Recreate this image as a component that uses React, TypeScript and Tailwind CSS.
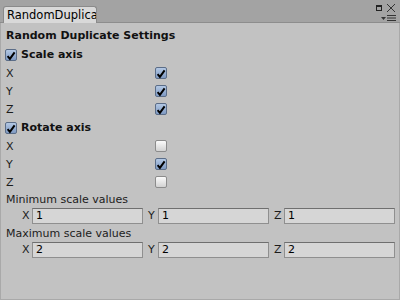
import React from 'react';

const font = { fontFamily: '"DejaVu Sans", Verdana, sans-serif' };

function Check({ on }: { on: boolean }) {
  return (
    <div
      className={`w-[12px] h-[12px] rounded-[2px] border flex items-center justify-center ${
        on
          ? 'border-[#5b6d88] bg-gradient-to-b from-[#b3c8e4] to-[#7f9ac3]'
          : 'border-[#8c8c8c] bg-gradient-to-b from-[#fbfbfb] to-[#d2d2d2]'
      }`}
    >
      {on && (
        <svg width="10" height="10" viewBox="0 0 10 10" className="mt-px">
          <path d="M1.6 5.2 L3.9 7.8 L8.6 1.4" fill="none" stroke="#000" strokeWidth="2" />
        </svg>
      )}
    </div>
  );
}

function HeaderToggle({ label, extra }: { label: string; extra?: string }) {
  return (
    <div className={`h-[18px] flex items-center pl-[4px] gap-[4px] ${extra ?? ''}`}>
      <Check on={true} />
      <span className="text-[11px] font-bold text-[#111] pt-px">{label}</span>
    </div>
  );
}

function AxisRow({ label, on }: { label: string; on: boolean }) {
  return (
    <div className="h-[18px] flex items-center pl-[5px]">
      <span className="w-[149px] text-[11px] text-[#1c1c1c] pt-[2px]">{label}</span>
      <Check on={on} />
    </div>
  );
}

function Field({ label, value }: { label: string; value: string }) {
  return (
    <div className="flex items-center flex-1">
      <span className="text-[11px] text-[#1c1c1c] w-[11px] pl-px">{label}</span>
      <div className="flex-1 h-[16px] bg-[#d6d6d6] border border-[#8f8f8f] border-t-[#6f6f6f] flex items-center pl-[3px] text-[11px] text-black">
        {value}
      </div>
    </div>
  );
}

function VectorRow({ values }: { values: string[] }) {
  return (
    <div className="h-[16px] flex items-center gap-[4px] pl-[20px] pr-[4px]">
      <Field label="X" value={values[0]} />
      <Field label="Y" value={values[1]} />
      <Field label="Z" value={values[2]} />
    </div>
  );
}

export default function App() {
  return (
    <div className="w-[400px] h-[300px] flex flex-col bg-[#c2c2c2] select-none" style={font}>
      {/* tab strip */}
      <div className="h-[23px] bg-[#a3a3a3] border-b border-[#8d8d8d] flex items-end justify-between pl-[3px] pr-[4px] relative">
        <div className="w-[94px] h-[17px] bg-[#d9d9d9] border border-b-0 border-[#8a8a8a] rounded-t-[3px] pl-[3px] text-[11.5px] text-black leading-[16px] overflow-hidden whitespace-nowrap mb-[-1px]">
          RandomDuplicate
        </div>
        <div className="absolute right-[4px] top-[3px] flex flex-col items-end gap-[2px]">
          <div className="flex items-center gap-[4px]">
            <svg width="6" height="6" viewBox="0 0 6 6">
              <rect x="0.5" y="0.5" width="5" height="5" fill="none" stroke="#222" />
              <rect x="0" y="0" width="6" height="2" fill="#222" />
            </svg>
            <svg width="10" height="10" viewBox="0 0 10 10">
              <path d="M1 1 L9 9 M9 1 L1 9" stroke="#333" strokeWidth="1" />
            </svg>
          </div>
          <div className="flex items-center gap-[1px]">
            <svg width="5" height="3" viewBox="0 0 5 3">
              <path d="M0 0 L5 0 L2.5 3 Z" fill="#333" />
            </svg>
            <svg width="9" height="6" viewBox="0 0 9 6">
              <path d="M0 0.5 H9 M0 3 H9 M0 5.5 H9" stroke="#333" strokeWidth="1" />
            </svg>
          </div>
        </div>
      </div>

      {/* inspector body */}
      <div className="flex-1 flex flex-col pt-[4px] border-x border-b border-[#a9a9a9]">
        <div className="h-[19px] flex items-center pl-[5px] text-[11px] font-bold text-[#111]">
          Random Duplicate Settings
        </div>
        <HeaderToggle label="Scale axis" />
        <AxisRow label="X" on={true} />
        <AxisRow label="Y" on={true} />
        <AxisRow label="Z" on={true} />
        <HeaderToggle label="Rotate axis" extra="mt-px" />
        <AxisRow label="X" on={false} />
        <AxisRow label="Y" on={true} />
        <AxisRow label="Z" on={false} />
        <div className="h-[17px] flex items-center pl-[5px] pt-[2px] text-[11px] text-[#1c1c1c]">Minimum scale values</div>
        <VectorRow values={['1', '1', '1']} />
        <div className="h-[18px] flex items-center pl-[5px] pt-[2px] text-[11px] text-[#1c1c1c]">Maximum scale values</div>
        <VectorRow values={['2', '2', '2']} />
      </div>
    </div>
  );
}
